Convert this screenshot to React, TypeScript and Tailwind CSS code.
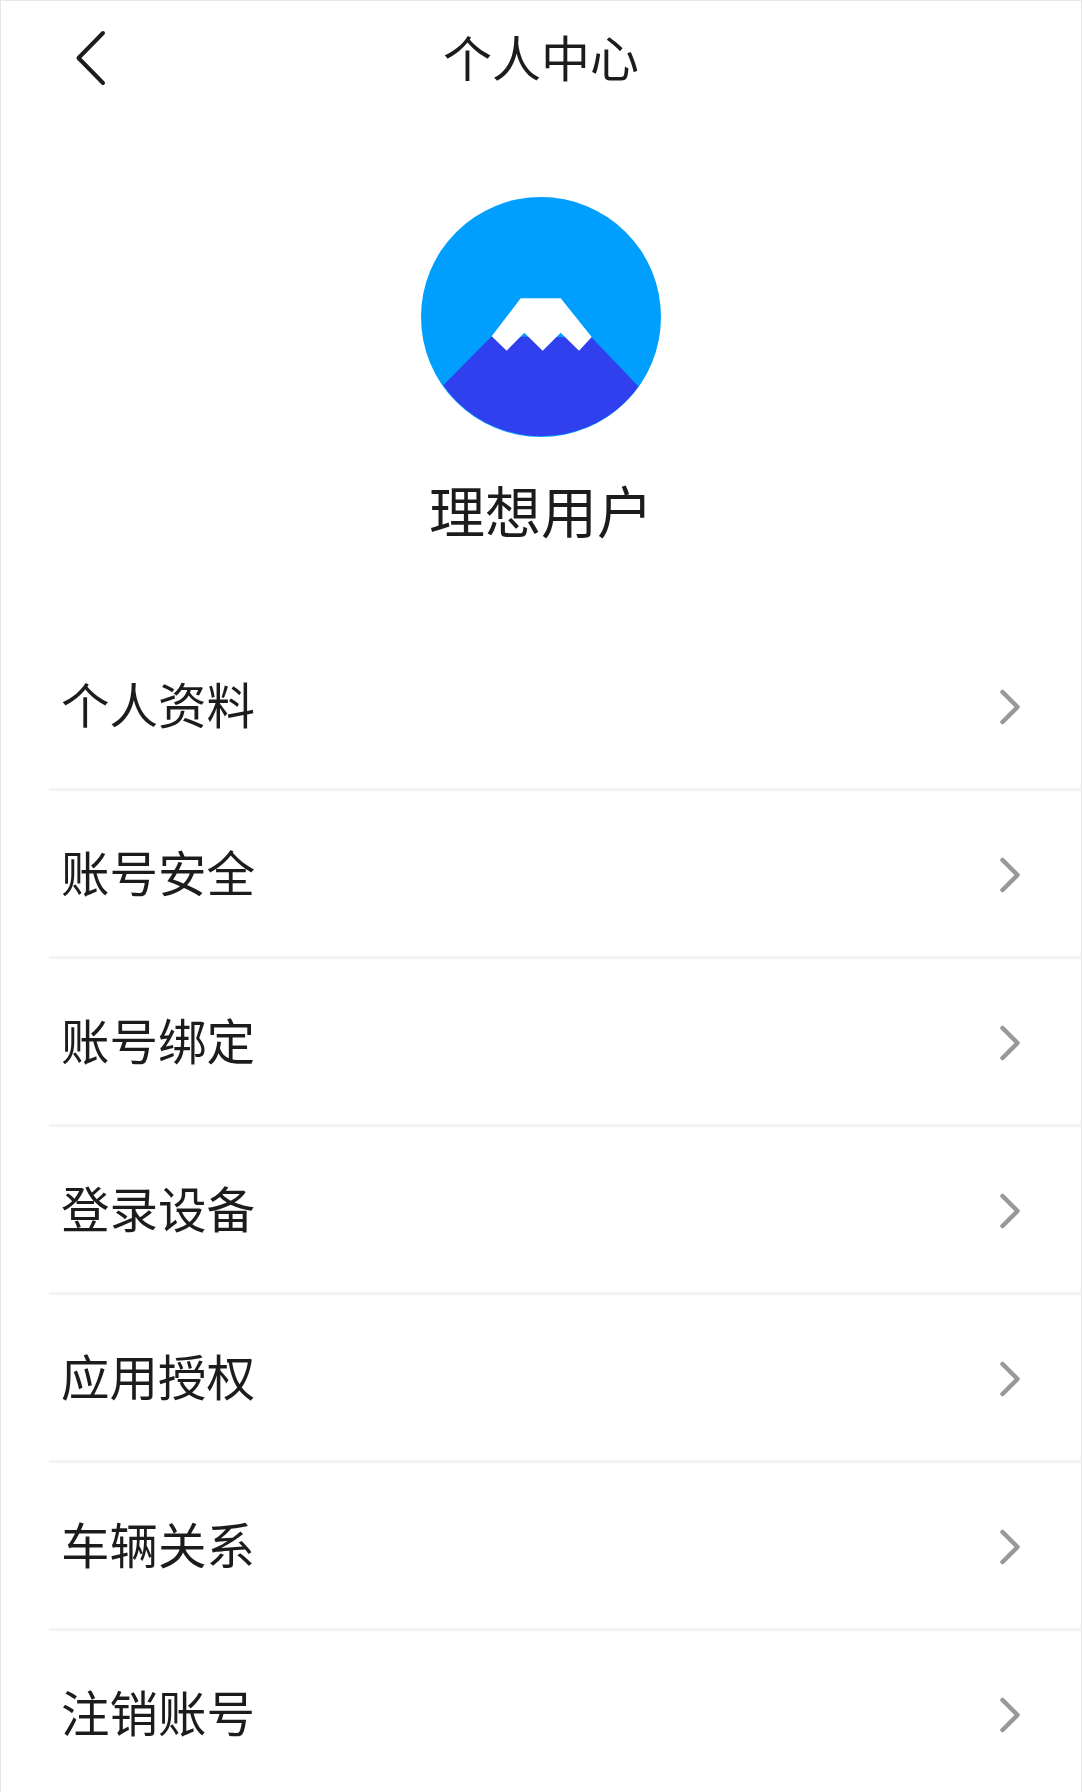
import { ChevronRight } from "lucide-react";

const menuItems = [
  "个人资料",
  "账号安全",
  "账号绑定",
  "登录设备",
  "应用授权",
  "车辆关系",
  "注销账号",
];

function BackIcon() {
  return (
    <svg width="32" height="56" viewBox="0 0 32 56" fill="none" className="mt-[4px]">
      <path
        d="M28 3 L3.5 28 L28 53"
        stroke="#1c1c1c"
        strokeWidth="4"
        strokeLinecap="round"
        strokeLinejoin="round"
      />
    </svg>
  );
}

function Avatar() {
  return (
    <svg width="240" height="240" viewBox="0 0 240 240">
      <circle cx="120" cy="120" r="120" fill="#009ffe" />
      <path
        d="M70.7 139.3 L22.3 188.3 A120 120 0 0 0 217.5 189.5 L170.7 140.5 Z"
        fill="#3040ee"
      />
      <path
        d="M99.7 101.3 H139.7 L170.7 140 L158 153.7 L139.7 135.7 L121.7 153.7 L103.3 135.7 L85.7 153.7 L70.7 139.3 Z"
        fill="#ffffff"
      />
    </svg>
  );
}

export default function App() {
  return (
    <div className="h-[1792px] w-[1082px] overflow-hidden border-x border-t border-[#e6e6e6] bg-white font-['Noto_Sans_CJK_SC',sans-serif] text-[#1c1c1c]">
      <header className="grid h-[109px] grid-cols-[1fr_auto_1fr] items-center px-[74px]">
        <BackIcon />
        <h1 className="text-[49px] leading-none">个人中心</h1>
        <div />
      </header>

      <section className="mt-[87px] flex flex-col items-center">
        <Avatar />
        <p className="mt-[44px] text-[56px] leading-[56px]">理想用户</p>
      </section>

      <ul className="mt-[86px] pl-[48px]">
        {menuItems.map((item) => (
          <li
            key={item}
            className="flex h-[168px] items-center justify-between border-b-[3px] border-[#f3f3f3] pl-[12px] pr-[41px]"
          >
            <span className="mb-[4px] text-[48.5px] leading-none">{item}</span>
            <ChevronRight
              className="mt-[2px] h-[60px] w-[60px] text-[#999999]"
              strokeWidth={1.8}
            />
          </li>
        ))}
      </ul>
    </div>
  );
}
